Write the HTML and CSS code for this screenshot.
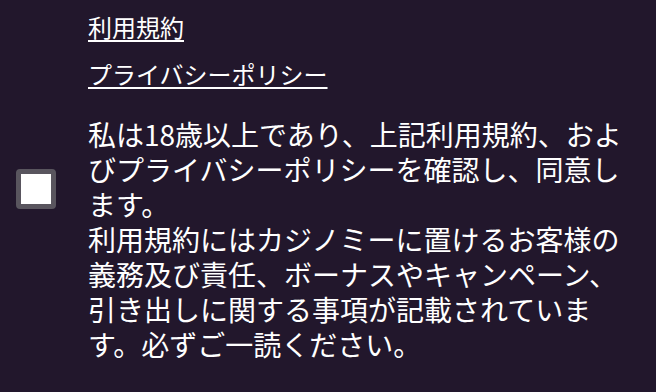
FILE: index.html
```html
<!DOCTYPE html>
<html lang="ja">
<head>
  <meta charset="UTF-8"/>
  <meta name="viewport" content="width=device-width, initial-scale=1.0"/>
  <title>利用規約への同意</title>
  <link rel="stylesheet" href="styles.css">
</head>
<body>
  <div class="terms">
    <div class="terms-links">
      <a href="#">利用規約</a>
      <a href="#">プライバシーポリシー</a>
    </div>
    <label class="agree">
      <input type="checkbox" class="agree-box">
      <span class="agree-text">私は18歳以上であり、上記利用規約、およびプライバシーポリシーを確認し、同意します。<br>利用規約にはカジノミーに置けるお客様の義務及び責任、ボーナスやキャンペーン、引き出しに関する事項が記載されています。必ずご一読ください。</span>
    </label>
  </div>
</body>
</html>
```

FILE: styles.css
```css
body {
  margin: 0;
  background: #22172c;
  color: #fff;
  font-family: "Noto Sans CJK JP", "Noto Sans", sans-serif;
}

.terms {
  padding: 3px 0 0 16px;
}

.terms-links {
  padding-left: 72px;
  margin-bottom: 20px;
}

.terms-links a {
  display: block;
  width: max-content;
  color: #fff;
  font-size: 24px;
  line-height: 47px;
  text-decoration: underline;
  text-underline-offset: 3px;
}

.agree {
  display: flex;
  align-items: flex-start;
  gap: 32px;
}

.agree-box {
  appearance: none;
  box-sizing: border-box;
  flex: none;
  width: 40px;
  height: 40px;
  margin: 52px 0 0;
  background: #fff;
  border: 5px solid #59555e;
  border-radius: 4px;
}

.agree-text {
  width: 550px;
  font-size: 28px;
  line-height: 35px;
}
```
